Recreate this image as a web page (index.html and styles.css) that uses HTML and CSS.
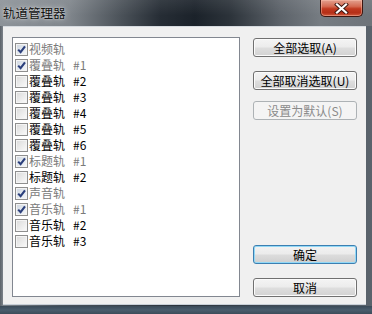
FILE: index.html
```html
<!DOCTYPE html>
<html>
<head>
<meta charset="utf-8">
<link rel="stylesheet" href="styles.css">
</head>
<body>
<div class="window">
  <div class="titlebar">
    <span class="title">轨道管理器</span>
    <div class="close">
      <svg width="15" height="11" viewBox="0 0 15 11">
        <path d="M3 1.5 L12 9.5 M12 1.5 L3 9.5" stroke="#3a1610" stroke-width="4" stroke-linecap="square"/>
        <path d="M3 1.5 L12 9.5 M12 1.5 L3 9.5" stroke="#ffffff" stroke-width="2.2" stroke-linecap="square"/>
      </svg>
    </div>
  </div>
  <div class="client">
    <div class="list">
      <div class="row dis"><span class="cb on"><svg viewBox="0 0 11 11" width="11" height="11"><path d="M2.2 5.6 L4.6 8.2 L9 2.4" fill="none" stroke="#2b3f7c" stroke-width="2.1"/></svg></span><span class="lbl">视频轨</span></div>
      <div class="row dis"><span class="cb on"><svg viewBox="0 0 11 11" width="11" height="11"><path d="M2.2 5.6 L4.6 8.2 L9 2.4" fill="none" stroke="#2b3f7c" stroke-width="2.1"/></svg></span><span class="lbl">覆叠轨</span><span class="num">#1</span></div>
      <div class="row"><span class="cb"></span><span class="lbl">覆叠轨</span><span class="num">#2</span></div>
      <div class="row"><span class="cb"></span><span class="lbl">覆叠轨</span><span class="num">#3</span></div>
      <div class="row"><span class="cb"></span><span class="lbl">覆叠轨</span><span class="num">#4</span></div>
      <div class="row"><span class="cb"></span><span class="lbl">覆叠轨</span><span class="num">#5</span></div>
      <div class="row"><span class="cb"></span><span class="lbl">覆叠轨</span><span class="num">#6</span></div>
      <div class="row dis"><span class="cb on"><svg viewBox="0 0 11 11" width="11" height="11"><path d="M2.2 5.6 L4.6 8.2 L9 2.4" fill="none" stroke="#2b3f7c" stroke-width="2.1"/></svg></span><span class="lbl">标题轨</span><span class="num">#1</span></div>
      <div class="row"><span class="cb"></span><span class="lbl">标题轨</span><span class="num">#2</span></div>
      <div class="row dis"><span class="cb on"><svg viewBox="0 0 11 11" width="11" height="11"><path d="M2.2 5.6 L4.6 8.2 L9 2.4" fill="none" stroke="#2b3f7c" stroke-width="2.1"/></svg></span><span class="lbl">声音轨</span></div>
      <div class="row dis"><span class="cb on"><svg viewBox="0 0 11 11" width="11" height="11"><path d="M2.2 5.6 L4.6 8.2 L9 2.4" fill="none" stroke="#2b3f7c" stroke-width="2.1"/></svg></span><span class="lbl">音乐轨</span><span class="num">#1</span></div>
      <div class="row"><span class="cb"></span><span class="lbl">音乐轨</span><span class="num">#2</span></div>
      <div class="row"><span class="cb"></span><span class="lbl">音乐轨</span><span class="num">#3</span></div>
    </div>
    <div class="buttons">
      <div class="btn b1">全部选取(A)</div>
      <div class="btn b2">全部取消选取(U)</div>
      <div class="btn b3 disabled">设置为默认(S)</div>
      <div class="btn b4 default">确定</div>
      <div class="btn b5">取消</div>
    </div>
  </div>
  <div class="bottomframe"></div>
</div>
</body>
</html>
```
FILE: styles.css
```css
html, body {
  margin: 0;
  padding: 0;
  background: #2e3a46;
}
body {
  font-family: "Noto Sans CJK SC", "Liberation Sans", sans-serif;
  font-size: 12px;
}
.window {
  width: 372px;
  height: 314px;
  overflow: hidden;
  background: linear-gradient(90deg, #5b6269 0px, #7c838a 3px, #4a535c 60px, #2a323b 180px, #46505a 300px, #5a636c 372px);
  display: flex;
  flex-direction: column;
}
.titlebar {
  height: 26px;
  flex: none;
  display: flex;
  justify-content: space-between;
  align-items: flex-start;
  background:
    linear-gradient(180deg, rgba(255,255,255,0.08) 0%, rgba(255,255,255,0) 60%),
    linear-gradient(90deg, #8d9399 0px, #7f858b 70px, #4c535a 120px, #262d35 160px, #1b222a 195px, #2c333a 230px, #5c6269 280px, #767c82 320px, #6e747a 372px);
}
.title {
  margin: 5px 0 0 3px;
  font-size: 12.5px;
  line-height: 15px;
  color: #111;
  text-shadow: 0 0 6px rgba(255,255,255,0.7), 0 0 2px rgba(255,255,255,0.6);
}
.close {
  width: 43px;
  height: 17px;
  margin-right: 9px;
  box-sizing: border-box;
  border: 1px solid #3d1610;
  border-top: none;
  border-radius: 0 0 5px 5px;
  background: linear-gradient(180deg, #e3a18f 0%, #d46a52 40%, #c0391f 55%, #b52f17 80%, #d05a3e 100%);
  box-shadow: inset 0 0 0 1px rgba(255,200,180,0.45);
  display: flex;
  align-items: center;
  justify-content: center;
}
.close svg { display: block; }
.client {
  margin-left: 3px;
  width: 363px;
  height: 279px;
  flex: none;
  box-sizing: border-box;
  background: #f0f0f0;
  border-top: 1px solid #d6dbe0;
  border-bottom: 1px solid #c8d0d8;
  padding: 10px 0 0 9px;
  display: flex;
  align-items: flex-start;
}
.bottomframe {
  flex: 1;
  margin-top: 1px;
  background: linear-gradient(180deg, #3a4a58 0%, #4a5d6d 50%, #3c4c5a 100%);
}
.list {
  width: 228px;
  height: 260px;
  box-sizing: border-box;
  border: 1px solid #828790;
  background: #ffffff;
  padding: 3px 0 0 2px;
}
.row {
  height: 16px;
  display: flex;
  align-items: center;
  color: #000;
  line-height: 16px;
}
.row.dis { color: #7a7a7a; }
.cb {
  width: 13px;
  height: 13px;
  box-sizing: border-box;
  border: 1px solid #8f8f8f;
  background: linear-gradient(135deg, #d9d9d9 0%, #ececec 55%, #fbfbfb 100%);
  box-shadow: inset 0 0 0 1px #f4f4f4;
  display: flex;
  align-items: center;
  justify-content: center;
  flex: none;
}
.cb.on {
  background: linear-gradient(135deg, #cfd6e0 0%, #e4e9ef 55%, #f6f8fa 100%);
}
.cb svg { display: block; }
.lbl { margin-left: 1px; }
.num { margin-left: 8px; }
.buttons {
  margin-left: 13px;
  padding-top: 1px;
  display: flex;
  flex-direction: column;
  width: 104px;
}
.btn {
  height: 19px;
  box-sizing: border-box;
  border: 1px solid #707070;
  border-radius: 3px;
  background: linear-gradient(180deg, #f4f4f4 0%, #ececec 48%, #dedede 52%, #d2d2d2 100%);
  box-shadow: inset 0 0 0 1px #fbfbfb;
  text-align: center;
  line-height: 17px;
  color: #000;
  font-size: 12px;
}
.b2 { margin-top: 14px; }
.b3 { margin-top: 11px; }
.b4 { margin-top: 125px; }
.b5 { margin-top: 14px; }
.btn.disabled {
  border-color: #adb2b5;
  background: #f4f4f4;
  box-shadow: none;
  color: #8a8a8a;
}
.btn.default {
  border-color: #3c7fb1;
  box-shadow: inset 0 0 0 1px #92d8f6;
  background: linear-gradient(180deg, #f2f2f2 0%, #ebebeb 48%, #dcdcdc 52%, #cfcfcf 100%);
}
```
